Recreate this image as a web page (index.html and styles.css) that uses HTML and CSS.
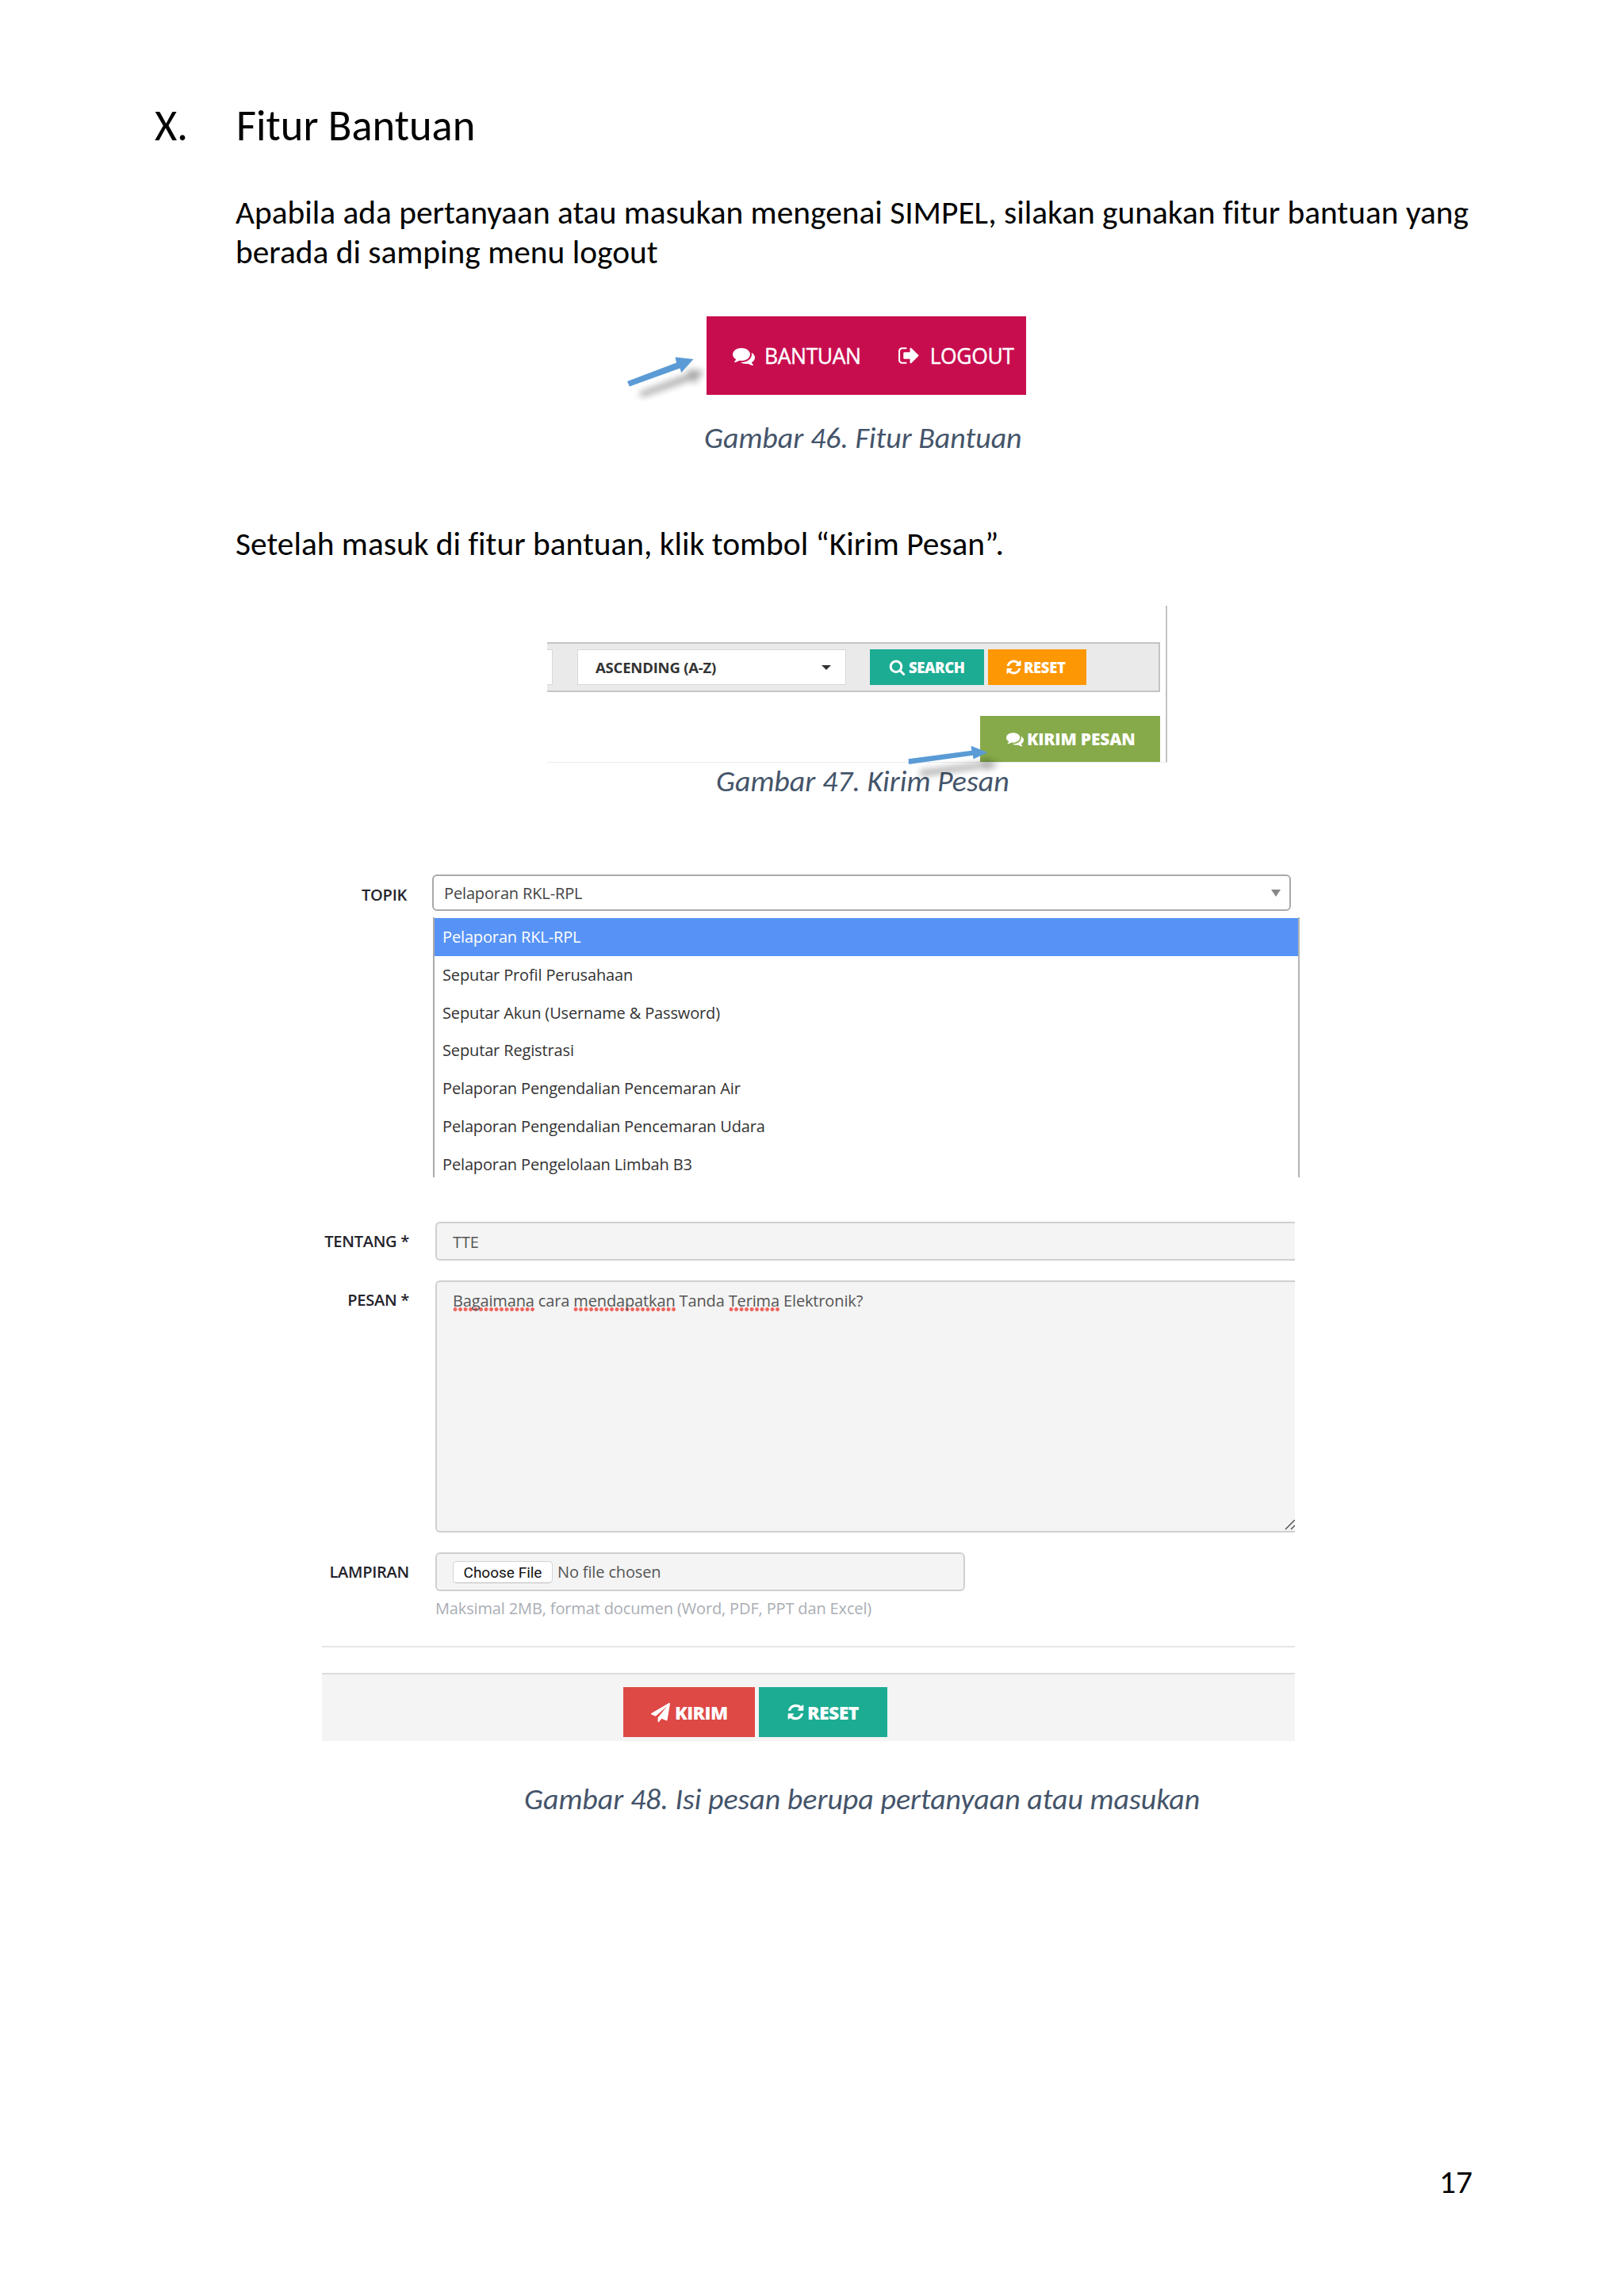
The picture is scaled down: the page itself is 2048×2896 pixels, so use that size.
FILE: index.html
```html
<!DOCTYPE html>
<html lang="id">
<head>
    <meta charset="utf-8">
    <title>Fitur Bantuan</title>
    <link rel="stylesheet" href="styles.css">
</head>
<body>

<!-- icon shapes, used in several buttons -->
<svg class="icon-defs">
    <symbol id="comments" viewBox="0 0 1792 1792"><path d="M1408 768q0 139-94 257t-256.5 186.5-353.5 68.5q-86 0-176-16-124 88-278 128-36 9-86 16h-3q-11 0-20.5-8t-11.5-21q-1-3-1-6.5t.5-6.5 2-6l2.5-5 3.5-5.5 4-5 4.5-5 4-4.5q5-6 23-25t26-29.5 22.5-29 25-38.5 20.5-44q-124-72-195-177t-71-224q0-139 94-257t256.500-186.500 353.500-68.500 353.500 68.500 256.500 186.500 94 257zm384 256q0 120-71 224.500t-195 176.500q10 24 20.500 44t25 38.500 22.500 29 26 29.500 23 25q1 1 4 4.500t4.500 5 4 5 3.500 5.500l2.500 5 2 6 .5 6.500-1 6.500q-3 14-13 22t-22 7q-50-7-86-16-154-40-278-128-90 16-176 16-271 0-472-132 58 4 88 4 161 0 309-45t264-129q125-92 192-212t67-254q0-77-23-152 129 71 204 178t75 230z"/></symbol>
    <symbol id="sign-out" viewBox="0 0 1792 1792"><path d="M704 1440q0 4 1 20t.5 26.5-3 23.5-10 19.5-20.5 6.5h-320q-119 0-203.5-84.5t-84.5-203.5v-704q0-119 84.5-203.5t203.5-84.5h320q13 0 22.5 9.5t9.500 22.500q0 4 1 20t.5 26.500-3 23.500-10 19.500-20.500 6.500h-320q-66 0-113 47t-47 113v704q0 66 47 113t113 47h312l11.500 1 11.500 3 8 5.500 7 9 2 13.500zm928-544q0 26-19 45l-544 544q-19 19-45 19t-45-19-19-45v-288h-448q-26 0-45-19t-19-45v-384q0-26 19-45t45-19h448v-288q0-26 19-45t45-19 45 19l544 544q19 19 19 45z"/></symbol>
    <symbol id="search" viewBox="0 0 1792 1792"><path d="M1216 832q0-185-131.500-316.500t-316.500-131.500-316.500 131.500-131.500 316.500 131.500 316.500 316.500 131.500 316.500-131.500 131.500-316.500zm512 832q0 52-38 90t-90 38q-54 0-90-38l-343-342q-179 124-399 124-143 0-273.500-55.500t-225-150-150-225-55.500-273.500 55.500-273.500 150-225 225-150 273.500-55.500 273.500 55.500 225 150 150 225 55.500 273.500q0 220-124 399l343 343q37 37 37 90z"/></symbol>
    <symbol id="refresh" viewBox="0 0 1792 1792"><path d="M1639 1056q0 5-1 7-64 268-268 434.500t-478 166.500q-146 0-282.500-55t-243.500-157l-129 129q-19 19-45 19t-45-19-19-45v-448q0-26 19-45t45-19h448q26 0 45 19t19 45-19 45l-137 137q71 66 161 102t187 36q134 0 250-65t186-179q11-17 53-117 8-23 30-23h192q13 0 22.500 9.500t9.500 22.500zm25-800v448q0 26-19 45t-45 19h-448q-26 0-45-19t-19-45 19-45l138-138q-148-137-349-137-134 0-250 65t-186 179q-11 17-53 117-8 23-30 23h-199q-13 0-22.500-9.500t-9.500-22.500v-7q65-268 270-434.500t480-166.500q146 0 284 55.500t245 156.500l130-129q19-19 45-19t45 19 19 45z"/></symbol>
    <symbol id="paper-plane" viewBox="0 0 1792 1792"><path d="M1764 11q33 24 27 64l-256 1536q-5 29-32 45-14 8-31 8-11 0-24-5l-453-185-242 295q-18 23-49 23-13 0-22-4-19-7-30.500-23.500t-11.500-36.500v-349l864-1059-1069 925-395-162q-37-14-40-55-2-40 32-59l1664-960q15-9 32-9 20 0 36 11z"/></symbol>
</svg>

<div class="page">

    <h1 class="title"><span class="title-number">X.</span>Fitur Bantuan</h1>

    <p class="text intro">Apabila ada pertanyaan atau masukan mengenai SIMPEL, silakan gunakan fitur bantuan yang<br>berada di samping menu logout</p>

    <div class="nav-figure">
        <div class="navbar">
            <a class="nav-item help"><svg class="icon"><use href="#comments"/></svg>BANTUAN</a>
            <a class="nav-item logout"><svg class="icon"><use href="#sign-out"/></svg>LOGOUT</a>
        </div>
        <svg class="arrow arrow-nav" viewBox="0 0 120 70">
            <path class="arrow-shadow" d="M26 56 L88 33 L87 27 L108 29 L95 45 L92 40 L29 62 Z"/>
            <path class="arrow-shape" d="M11 42 L73 18.500 L71.500 11.500 L94.500 14 L79.200 31 L77.500 25.500 L13.800 48.500 Z"/>
        </svg>
    </div>
    <p class="caption cap46">Gambar 46. Fitur Bantuan</p>

    <p class="text after">Setelah masuk di fitur bantuan, klik tombol “Kirim Pesan”.</p>

    <div class="list-figure">
        <div class="toolbar">
            <div class="stub"></div>
            <div class="sort">ASCENDING (A-Z)<svg class="caret" viewBox="0 0 12 6"><path d="M0 0H12L6 6Z"/></svg></div>
            <button class="btn search"><svg class="icon"><use href="#search"/></svg>SEARCH</button>
            <button class="btn reset-orange"><svg class="icon"><use href="#refresh"/></svg>RESET</button>
        </div>
        <button class="btn send-message"><svg class="icon"><use href="#comments"/></svg>KIRIM PESAN</button>
        <svg class="arrow arrow-send" viewBox="0 0 130 60">
            <path class="arrow-shadow" d="M20 42 L100 32 L99 27 L120 34 L103 42 L102 38 L21 49 Z"/>
            <path class="arrow-shape" d="M5.500 27.300 L85.300 16.700 L84.500 10.800 L105.500 19 L87.700 27.500 L86.700 22.700 L6 34 Z"/>
        </svg>
    </div>
    <p class="caption cap47">Gambar 47. Kirim Pesan</p>

    <div class="form">
        <div class="row topic-row">
            <label>TOPIK</label>
            <div class="topic">
                <div class="select">Pelaporan RKL-RPL<svg class="select-arrow" viewBox="0 0 12 9"><path d="M0 0H12L6 9Z"/></svg></div>
                <ul class="options">
                    <li class="active">Pelaporan RKL-RPL</li>
                    <li>Seputar Profil Perusahaan</li>
                    <li>Seputar Akun (Username &amp; Password)</li>
                    <li>Seputar Registrasi</li>
                    <li>Pelaporan Pengendalian Pencemaran Air</li>
                    <li>Pelaporan Pengendalian Pencemaran Udara</li>
                    <li>Pelaporan Pengelolaan Limbah B3</li>
                </ul>
            </div>
        </div>

        <div class="row about-row">
            <label>TENTANG *</label>
            <div class="field">TTE</div>
        </div>

        <div class="row message-row">
            <label>PESAN *</label>
            <div class="field message">
                <span class="typo">Bagaimana</span> cara <span class="typo">mendapatkan</span> Tanda <span class="typo">Terima</span> Elektronik?
                <svg class="grip" viewBox="0 0 13 13"><path d="M1 12L13 0M8 12L13 7"/></svg>
            </div>
        </div>

        <div class="row file-row">
            <label>LAMPIRAN</label>
            <div class="field file"><span class="choose">Choose File</span>No file chosen</div>
        </div>
        <p class="hint">Maksimal 2MB, format documen (Word, PDF, PPT dan Excel)</p>

        <div class="actions">
            <button class="btn send"><svg class="icon"><use href="#paper-plane"/></svg>KIRIM</button>
            <button class="btn reset"><svg class="icon"><use href="#refresh"/></svg>RESET</button>
        </div>
    </div>
    <p class="caption cap48">Gambar 48. Isi pesan berupa pertanyaan atau masukan</p>

    <div class="page-number">17</div>
</div>

</body>
</html>
```
FILE: styles.css
```css
* {
    box-sizing: border-box;
}

body {
    margin: 0;
    background: #fff;
    color: #000;
    font-family: "Open Sans", sans-serif;
}

p, h1, ul {
    margin: 0;
    padding: 0;
}

.icon-defs {
    display: none;
}

.page {
    width: 2048px;
    height: 2896px;
    padding-top: 129px;
    overflow: hidden;
    font-variant-ligatures: none;
}

/* document text */
.title {
    display: flex;
    margin-left: 195px;
    font: 400 54.5px/60px Carlito, Lato, sans-serif;
    font-variant-ligatures: none;
}

.title-number {
    width: 103px;
}

.text {
    margin-left: 297px;
    font: 41.4px/50px Carlito, Lato, sans-serif;
    font-variant-ligatures: none;
    white-space: nowrap;
}

.intro {
    margin-top: 54px;
}

.after {
    margin-top: 89px;
}

.caption {
    color: #44546a;
    font: italic 37.9px/40px Carlito, Lato, sans-serif;
    font-variant-ligatures: none;
    white-space: nowrap;
}

.cap46 {
    margin: 34px 0 0 888px;
}

.cap47 {
    margin: 3px 0 0 903px;
}

.cap48 {
    margin: 53px 0 0 661px;
}

.page-number {
    margin: 443px 0 0 1815px;
    font: 41.4px/40px Carlito, Lato, sans-serif;
}

.icon {
    display: block;
    flex: none;
    width: 21px;
    height: 21px;
    fill: currentColor;
}

/* arrows drawn over the figures */
.arrow {
    position: absolute;
    overflow: visible;
}

.arrow-shape {
    fill: #5b9bd5;
}

.arrow-shadow {
    fill: #000;
    opacity: .35;
    filter: blur(4px);
}

.arrow-nav {
    left: -111px;
    top: 40px;
    width: 120px;
    height: 70px;
}

.arrow-send {
    left: 450px;
    top: 166px;
    width: 130px;
    height: 60px;
}

/* menu */
.nav-figure {
    position: relative;
    width: 403px;
    margin: 56px 0 0 891px;
}

.navbar {
    position: relative;
    z-index: 1;
    display: flex;
    align-items: center;
    height: 99px;
    padding-left: 33px;
    background: #c80d4f;
    color: #fff;
    font-size: 26.5px;
    letter-spacing: -.4px;
    -webkit-text-stroke: .4px #fff;
}

.nav-item {
    display: flex;
    align-items: center;
}

.help .icon {
    width: 28px;
    height: 28px;
    margin-right: 12px;
}

.logout {
    margin-left: 46px;
}

.logout .icon {
    width: 29px;
    height: 29px;
    margin-right: 12px;
}

/* message list toolbar */
.list-figure {
    position: relative;
    width: 782px;
    height: 198px;
    margin: 53px 0 0 690px;
    padding-top: 46px;
    border-right: 2px solid #c4c4c4;
    border-bottom: 1px solid #e6edf1;
}

.toolbar {
    display: flex;
    align-items: center;
    width: 773px;
    height: 63px;
    background: #eaeaea;
    border: 2px solid #c4c4c4;
    border-left: 0;
}

.stub {
    width: 7px;
    height: 45px;
    background: #fff;
    border: 1px solid #d8d8d8;
    border-left: 0;
}

.sort {
    display: flex;
    align-items: center;
    justify-content: space-between;
    width: 339px;
    height: 45px;
    margin: 0 30px 0 31px;
    padding: 0 18px 0 22px;
    background: #fff;
    border: 1px solid #d8d8d8;
    color: #333;
    font-size: 18.5px;
    font-weight: 700;
    letter-spacing: -.2px;
}

.caret {
    width: 12px;
    height: 6px;
    fill: #333;
}

.btn {
    display: flex;
    align-items: center;
    height: 45px;
    padding: 0 0 0 24px;
    border: 0;
    color: #fff;
    font: 800 18.5px "Open Sans", sans-serif;
    letter-spacing: -.4px;
    white-space: nowrap;
}

.search {
    width: 144px;
    background: #1cac93;
}

.search .icon {
    margin-right: 4px;
}

.reset-orange {
    width: 124px;
    margin-left: 5px;
    padding-left: 22px;
    background: #fe9704;
}

.reset-orange .icon {
    margin-right: 2px;
}

.send-message {
    width: 227px;
    height: 58px;
    margin: 30px 0 0 546px;
    padding-left: 33px;
    background: #86aa49;
    font-size: 21px;
    letter-spacing: -.2px;
}

.send-message .icon {
    width: 22px;
    height: 22px;
    margin-right: 4px;
}

/* message form */
.form {
    width: 1232px;
    margin: 98px 0 0 406px;
    font-size: 20px;
    letter-spacing: -.14px;
}

.row {
    display: flex;
    width: 1227px;
}

label {
    flex: none;
    width: 110px;
    margin-right: 33px;
    color: #23232b;
    font-weight: 600;
    line-height: 50px;
    text-align: right;
    letter-spacing: -.25px;
    white-space: nowrap;
}

.topic-row label {
    width: 107px;
    margin-right: 32px;
    line-height: 51px;
}

.select {
    display: flex;
    align-items: center;
    justify-content: space-between;
    width: 1083px;
    height: 46px;
    padding: 0 11px 0 13px;
    border: 2px solid #aaa;
    border-radius: 6px;
    color: #444;
}

.select-arrow {
    width: 12px;
    height: 9px;
    fill: #888;
}

.options {
    width: 1093px;
    height: 328px;
    margin: 8px 0 0 1px;
    padding-top: 1px;
    overflow: hidden;
    border-left: 2px solid #aaa;
    border-right: 2px solid #b4b4b4;
    list-style: none;
    color: #333;
}

.options li {
    height: 47.8px;
    padding-left: 10px;
    line-height: 48.4px;
}

.options .active {
    background: #5793f6;
    color: #fff;
}

.about-row {
    height: 49px;
    margin-top: 56px;
}

.field {
    flex: 1;
    height: 49px;
    padding-left: 20px;
    background: #f4f4f4;
    border: 2px solid #d0d0d0;
    border-right: 0;
    border-radius: 6px 0 0 6px;
    color: #555;
    line-height: 47px;
}

.message-row {
    margin-top: 25px;
}

.message {
    position: relative;
    height: 318px;
}

/* spelling marks */
.typo {
    background: radial-gradient(circle at 3px 2.5px, #f0625c 2px, transparent 2.8px) left bottom / 6.5px 5px repeat-x;
}

.grip {
    position: absolute;
    right: 0;
    bottom: 1px;
    width: 13px;
    height: 13px;
    stroke: #555;
    stroke-width: 1.5;
}

.file-row {
    height: 49px;
    margin-top: 25px;
}

.file {
    display: flex;
    align-items: center;
    flex: none;
    width: 668px;
    border-right: 2px solid #d0d0d0;
    border-radius: 6px;
}

.choose {
    width: 126px;
    height: 28px;
    margin-right: 6px;
    background: #fff;
    border: 1px solid #d4d4d4;
    border-bottom-color: #bbb;
    border-radius: 5px;
    color: #111;
    font: 19px/27px Roboto, sans-serif;
    letter-spacing: 0;
    text-align: center;
}

.hint {
    width: 1227px;
    height: 71px;
    padding: 6px 0 0 143px;
    border-bottom: 2px solid #e6e6e6;
    color: #aaaeb4;
    line-height: 32px;
}

.actions {
    display: flex;
    width: 1227px;
    height: 86px;
    margin-top: 32px;
    padding: 16px 0 0 380px;
    background: #f4f4f4;
    border-top: 2px solid #dcdcdc;
}

.actions .btn {
    height: 63px;
    padding-left: 35px;
    font-size: 23px;
    letter-spacing: -.6px;
}

.send {
    width: 166px;
    background: #de4945;
}

.send .icon {
    width: 24px;
    height: 24px;
    margin-right: 6px;
}

.reset {
    width: 162px;
    margin-left: 5px;
    background: #1cac93;
}

.reset .icon {
    width: 23px;
    height: 23px;
    margin-right: 3px;
}
```
